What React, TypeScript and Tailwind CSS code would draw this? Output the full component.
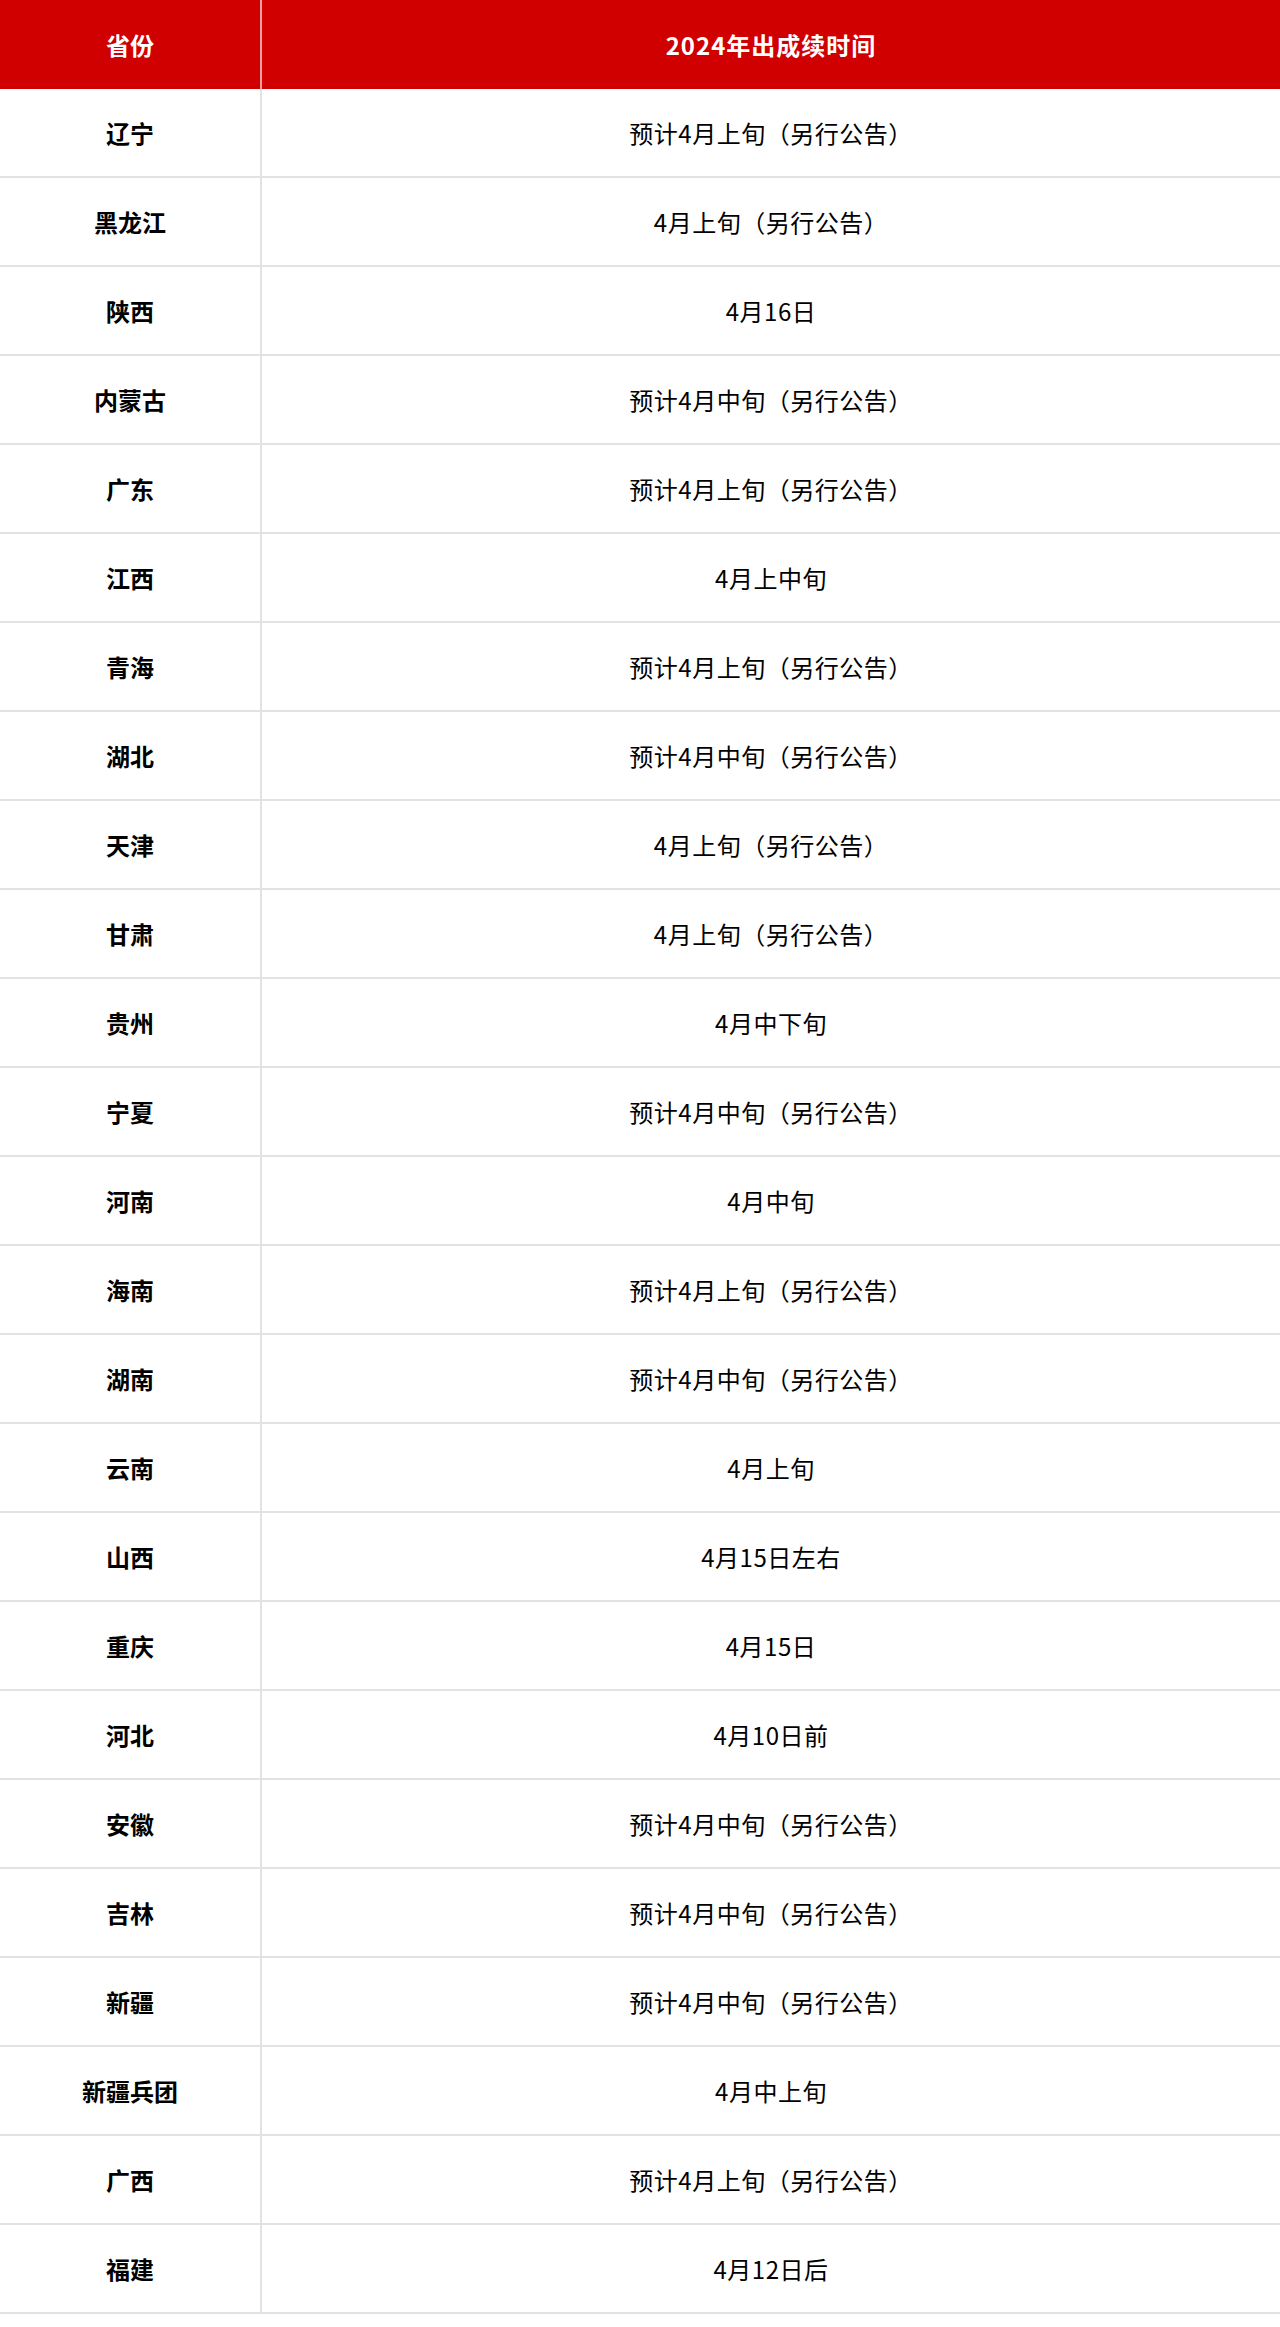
const rows: [string, string][] = [
  ["辽宁", "预计4月上旬（另行公告）"],
  ["黑龙江", "4月上旬（另行公告）"],
  ["陕西", "4月16日"],
  ["内蒙古", "预计4月中旬（另行公告）"],
  ["广东", "预计4月上旬（另行公告）"],
  ["江西", "4月上中旬"],
  ["青海", "预计4月上旬（另行公告）"],
  ["湖北", "预计4月中旬（另行公告）"],
  ["天津", "4月上旬（另行公告）"],
  ["甘肃", "4月上旬（另行公告）"],
  ["贵州", "4月中下旬"],
  ["宁夏", "预计4月中旬（另行公告）"],
  ["河南", "4月中旬"],
  ["海南", "预计4月上旬（另行公告）"],
  ["湖南", "预计4月中旬（另行公告）"],
  ["云南", "4月上旬"],
  ["山西", "4月15日左右"],
  ["重庆", "4月15日"],
  ["河北", "4月10日前"],
  ["安徽", "预计4月中旬（另行公告）"],
  ["吉林", "预计4月中旬（另行公告）"],
  ["新疆", "预计4月中旬（另行公告）"],
  ["新疆兵团", "4月中上旬"],
  ["广西", "预计4月上旬（另行公告）"],
  ["福建", "4月12日后"],
]

export default function App() {
  return (
    <div
      className="w-[1280px] h-[2327px] bg-white text-black"
      style={{ fontFamily: '"Noto Sans CJK SC", "Noto Sans", sans-serif' }}
    >
      {/* Header */}
      <div className="flex h-[89px] bg-[#d10000] text-white text-[24px] font-bold">
        <div className="w-[262px] flex items-center justify-center border-r-2 border-[#e8a0a0]">
          省份
        </div>
        <div className="flex-1 flex items-center justify-center tracking-[1px]">2024年出成续时间</div>
      </div>

      {/* Body */}
      {rows.map(([prov, time]) => (
        <div key={prov} className="flex h-[89px] border-b-2 border-[#e2e2e2]">
          <div className="w-[262px] flex items-center justify-center border-r-2 border-[#e2e2e2] text-[24px] font-bold">
            {prov}
          </div>
          <div className="flex-1 flex items-center justify-center text-[24px] font-normal tracking-[0.5px]">
            {time}
          </div>
        </div>
      ))}
    </div>
  )
}
